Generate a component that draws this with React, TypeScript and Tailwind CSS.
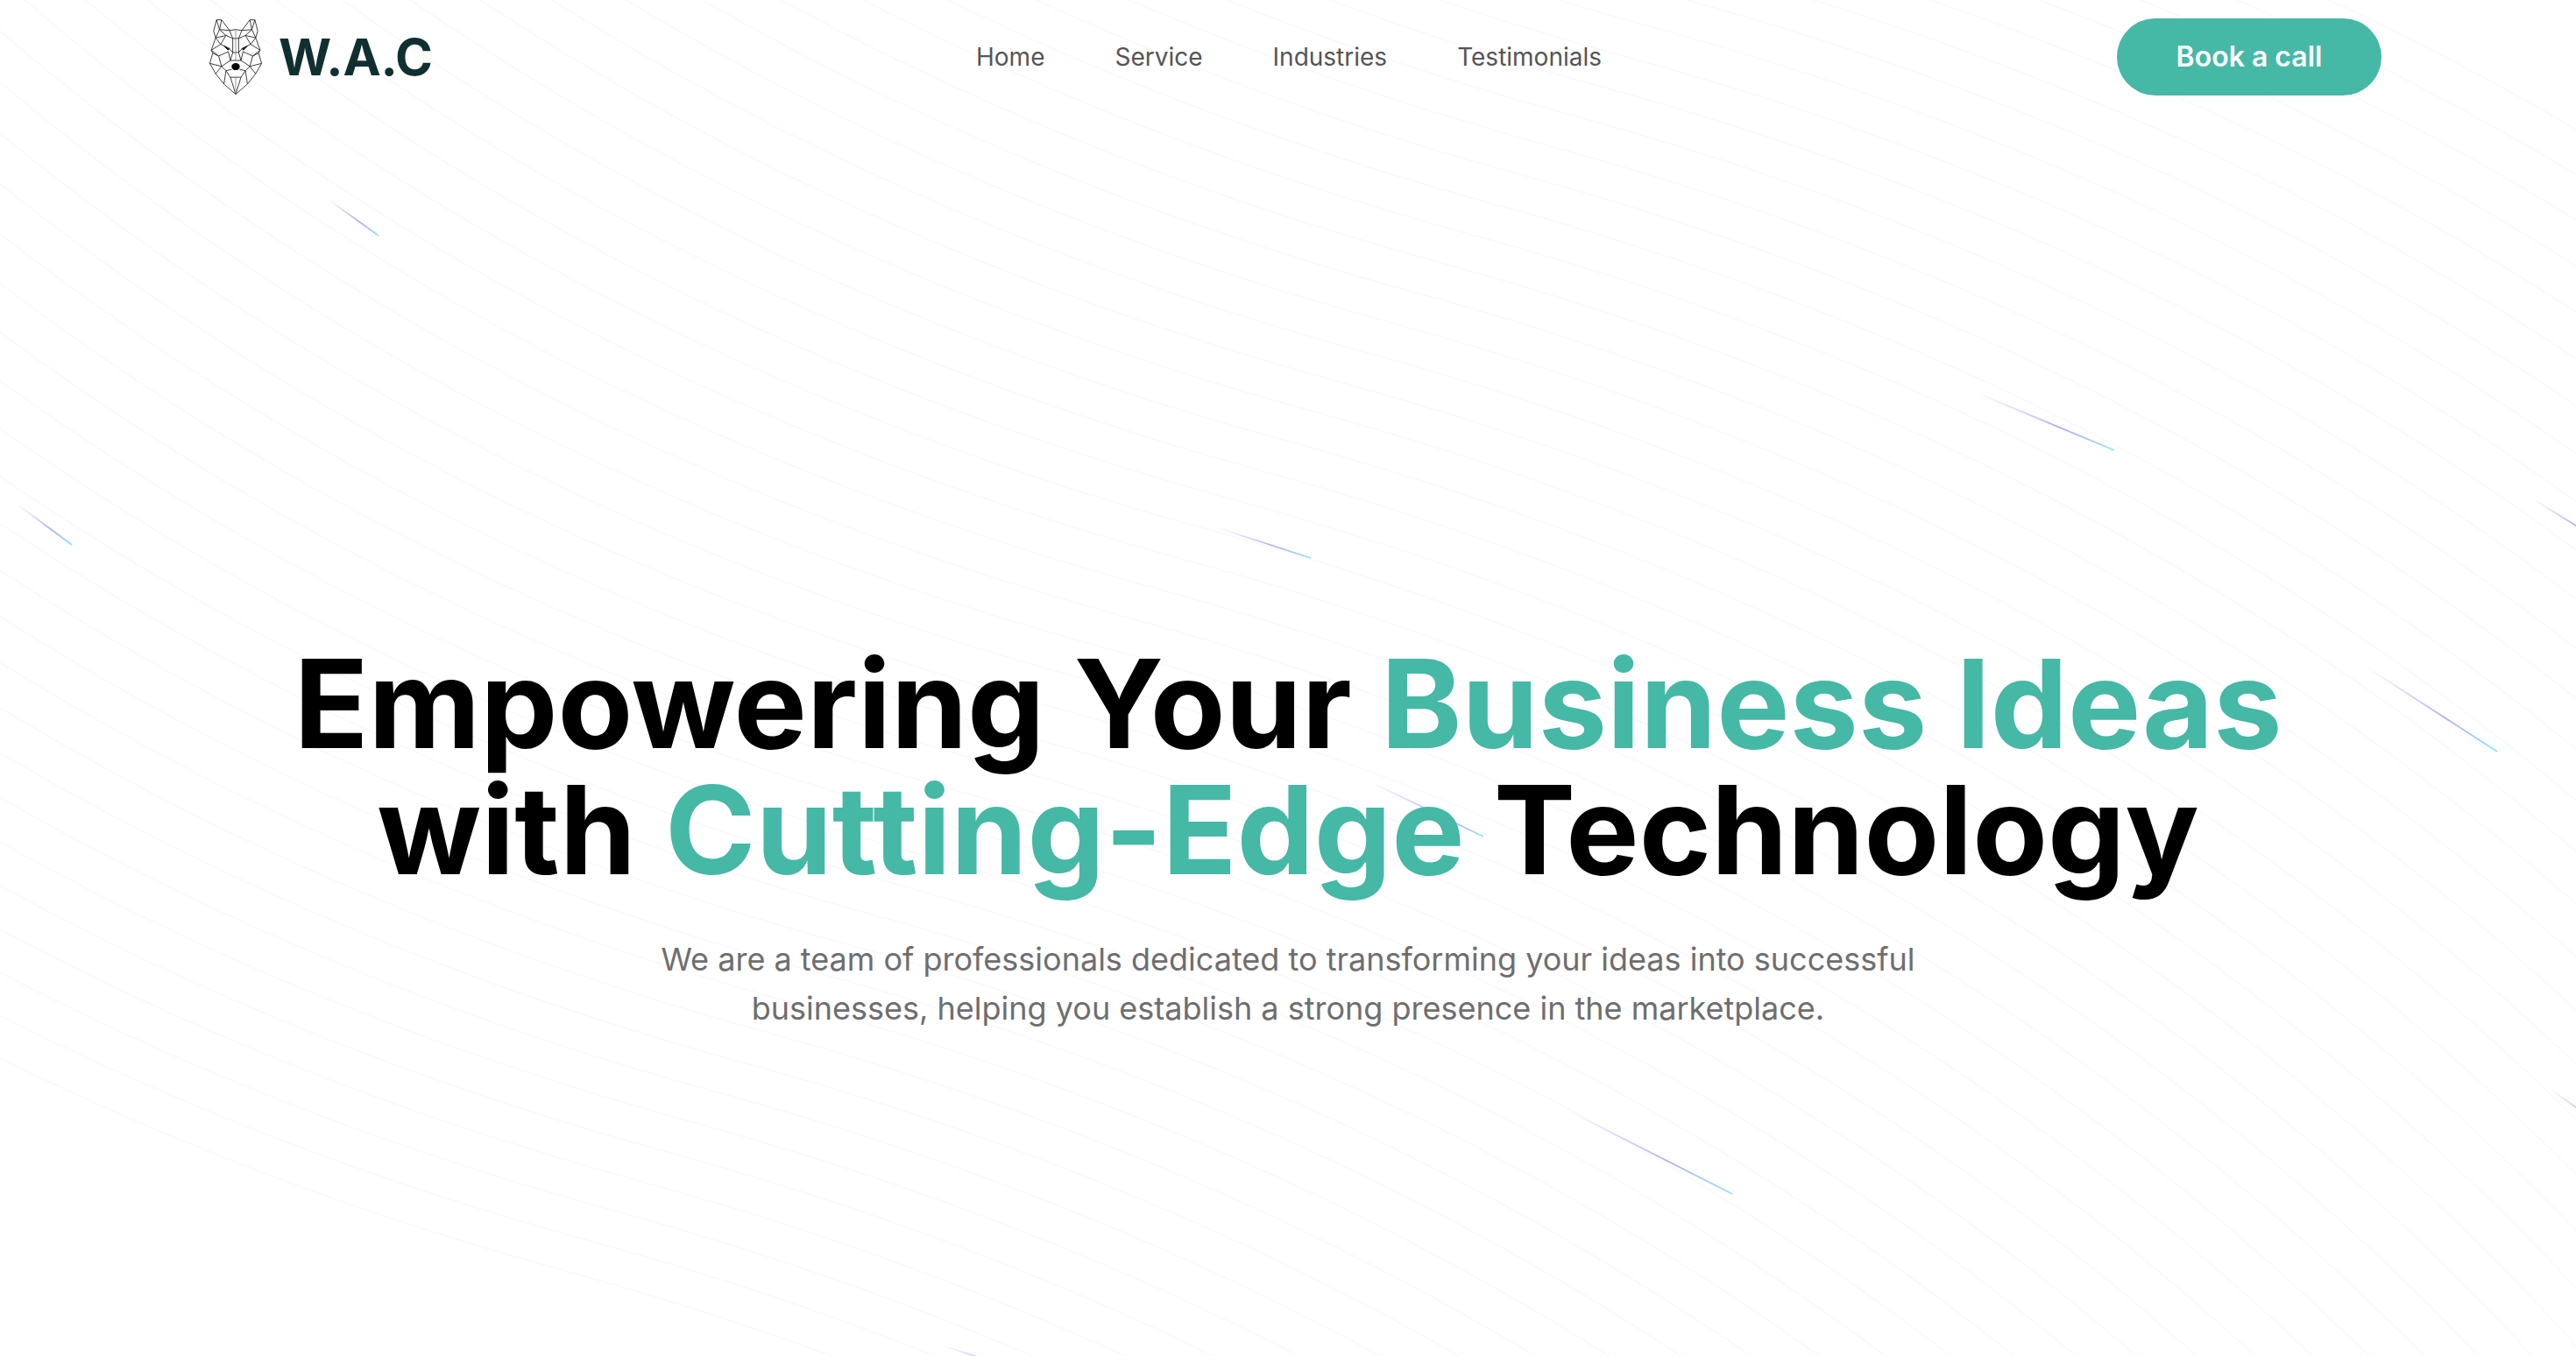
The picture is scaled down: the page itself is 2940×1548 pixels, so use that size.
const INTER = "font-['Inter',sans-serif]";

const beams = [
  { x1: 375, y1: 228, x2: 432, y2: 269 },
  { x1: 2255, y1: 448, x2: 2413, y2: 514 },
  { x1: 20, y1: 576, x2: 82, y2: 622 },
  { x1: 1388, y1: 602, x2: 1496, y2: 637 },
  { x1: 2890, y1: 569, x2: 2975, y2: 622 },
  { x1: 2700, y1: 761, x2: 2850, y2: 858 },
  { x1: 1565, y1: 893, x2: 1693, y2: 955 },
  { x1: 1790, y1: 1268, x2: 1977, y2: 1363 },
  { x1: 1075, y1: 1536, x2: 1175, y2: 1568 },
  { x1: 2910, y1: 1243, x2: 2985, y2: 1296 },
];

const faintPaths = Array.from({ length: 50 }, (_, i) => {
  const dx = 7 * i;
  const dy = -8 * i;
  const p = (x: number, y: number) => `${x + dx} ${y + dy}`;
  return `M${p(-380, -189)}C${p(-380, -189)} ${p(-312, 216)} ${p(152, 343)}C${p(616, 470)} ${p(684, 875)} ${p(684, 875)}`;
});

function Beams() {
  return (
    <div className="absolute inset-0 pointer-events-none">
      <svg className="absolute inset-0 w-full h-full" viewBox="0 0 696 366" preserveAspectRatio="xMidYMid meet" fill="none">
        {faintPaths.map((d, i) => (
          <path key={i} d={d} stroke="#000" strokeOpacity="0.022" strokeWidth="0.4" />
        ))}
      </svg>
      <svg className="absolute inset-0 w-full h-full" viewBox="0 0 2940 1548" fill="none">
        <defs>
          {beams.map((b, i) => (
            <linearGradient key={i} id={`beam-${i}`} gradientUnits="userSpaceOnUse" x1={b.x1} y1={b.y1} x2={b.x2} y2={b.y2}>
              <stop offset="0" stopColor="#AE48FF" stopOpacity="0" />
              <stop offset="0.6" stopColor="#6344F5" stopOpacity="0.45" />
              <stop offset="1" stopColor="#18CCFC" stopOpacity="0.5" />
            </linearGradient>
          ))}
        </defs>
        {beams.map((b, i) => (
          <line key={i} x1={b.x1} y1={b.y1} x2={b.x2} y2={b.y2} stroke={`url(#beam-${i})`} strokeWidth="1.8" />
        ))}
      </svg>
    </div>
  );
}

function WolfHalf() {
  const lines = [
    "M143 100L122 103L95 67L78 67L68 105L75 128L60 170L65 180L55 215L75 250L103 285L143 320",
    "M78 67L88 100L75 128M95 67L88 100L122 103M88 100L110 120M75 128L110 120",
    "M122 103L133 130L143 130M110 120L133 130M133 130L133 178M110 120L92 150M75 128L92 150M92 150L60 170",
    "M92 150L122 165L133 178L143 178M65 180L85 190M60 170L85 190M85 190L118 175M118 175L125 205",
    "M85 190L95 225M55 215L95 225M95 225L125 205M125 205L143 205M95 225L75 250M95 225L110 240",
    "M110 240L130 235M110 240L103 285M110 240L125 262M125 262L143 262M125 262L143 320",
    "M133 178L125 205",
  ];
  return (
    <>
      {lines.map((d, i) => (
        <path key={i} d={d} />
      ))}
      <path d="M102 155L122 165L117 170Z" fill="#111" />
    </>
  );
}

function Wolf() {
  return (
    <svg className="w-[64px] h-[88px] shrink-0" viewBox="50 62 186 262" fill="none" stroke="#222" strokeWidth="2.6" strokeLinejoin="round">
      <WolfHalf />
      <g transform="matrix(-1 0 0 1 286 0)">
        <WolfHalf />
      </g>
      <path d="M143 100V205" stroke="#888" />
      <path d="M143 262V320" stroke="#888" />
      <ellipse cx="143" cy="226" rx="14" ry="12" fill="#000" stroke="none" />
    </svg>
  );
}

export default function App() {
  const links = ["Home", "Service", "Industries", "Testimonials"];
  return (
    <div className={`relative w-full h-[1548px] overflow-hidden bg-white ${INTER}`}>
      <Beams />
      <div className="relative">
        <nav className="flex items-center h-[130px] pl-[237px] pr-[222px]">
          <div className="flex items-center gap-[17px] w-[877px]">
            <Wolf />
            <span className="text-[58px] leading-none font-bold text-[#112f30] tracking-[-0.005em]">W.A.C</span>
          </div>
          <div className="flex items-center gap-[80px] text-[28px] text-[#555555]">
            {links.map((l) => (
              <span key={l}>{l}</span>
            ))}
          </div>
          <button className="ml-auto w-[302px] h-[88px] rounded-full bg-[#45b8a6] text-white text-[32px] font-semibold">
            Book a call
          </button>
        </nav>
        <h1 className="mt-[601px] text-center text-[140px] leading-[144px] font-bold text-black">
          Empowering Your <span className="text-[#45b8a6]">Business Ideas</span>
          <br />
          with <span className="text-[#45b8a6]">Cutting-Edge</span> Technology
        </h1>
        <p className="mt-[48px] text-center text-[36px] leading-[56px] text-[#6e6e6e]">
          We are a team of professionals dedicated to transforming your ideas into successful
          <br />
          businesses, helping you establish a strong presence in the marketplace.
        </p>
      </div>
    </div>
  );
}
